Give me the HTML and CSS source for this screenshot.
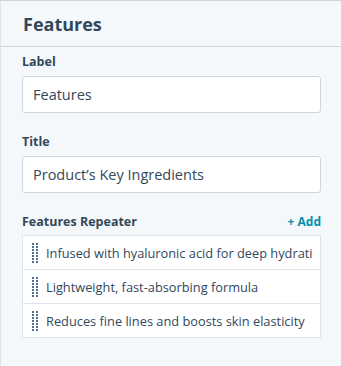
FILE: index.html
```html
<!DOCTYPE html>
<html>
<head>
<meta charset="utf-8">
<link rel="stylesheet" href="styles.css">
</head>
<body>
<div class="panel">
  <div class="header"><h1 class="title">Features</h1></div>
  <div class="body">
    <div class="field">
      <div class="label">Label</div>
      <div class="input">Features</div>
    </div>
    <div class="field">
      <div class="label">Title</div>
      <div class="input">Product’s Key Ingredients</div>
    </div>
    <div class="field">
      <div class="label-row"><span class="label">Features Repeater</span><span class="add">+ Add</span></div>
      <div class="list">
        <div class="row"><svg class="handle" width="6" height="20" viewBox="0 0 6 20"><g fill="#516f90"><rect x="0" y="0" width="2" height="2"/><rect x="4" y="0" width="2" height="2"/><rect x="0" y="3" width="2" height="2"/><rect x="4" y="3" width="2" height="2"/><rect x="0" y="6" width="2" height="2"/><rect x="4" y="6" width="2" height="2"/><rect x="0" y="9" width="2" height="2"/><rect x="4" y="9" width="2" height="2"/><rect x="0" y="12" width="2" height="2"/><rect x="4" y="12" width="2" height="2"/><rect x="0" y="15" width="2" height="2"/><rect x="4" y="15" width="2" height="2"/><rect x="0" y="18" width="2" height="2"/><rect x="4" y="18" width="2" height="2"/></g></svg><span class="text">Infused with hyaluronic acid for deep hydration</span></div>
        <div class="row"><svg class="handle" width="6" height="20" viewBox="0 0 6 20"><g fill="#516f90"><rect x="0" y="0" width="2" height="2"/><rect x="4" y="0" width="2" height="2"/><rect x="0" y="3" width="2" height="2"/><rect x="4" y="3" width="2" height="2"/><rect x="0" y="6" width="2" height="2"/><rect x="4" y="6" width="2" height="2"/><rect x="0" y="9" width="2" height="2"/><rect x="4" y="9" width="2" height="2"/><rect x="0" y="12" width="2" height="2"/><rect x="4" y="12" width="2" height="2"/><rect x="0" y="15" width="2" height="2"/><rect x="4" y="15" width="2" height="2"/><rect x="0" y="18" width="2" height="2"/><rect x="4" y="18" width="2" height="2"/></g></svg><span class="text">Lightweight, fast-absorbing formula</span></div>
        <div class="row"><svg class="handle" width="6" height="20" viewBox="0 0 6 20"><g fill="#516f90"><rect x="0" y="0" width="2" height="2"/><rect x="4" y="0" width="2" height="2"/><rect x="0" y="3" width="2" height="2"/><rect x="4" y="3" width="2" height="2"/><rect x="0" y="6" width="2" height="2"/><rect x="4" y="6" width="2" height="2"/><rect x="0" y="9" width="2" height="2"/><rect x="4" y="9" width="2" height="2"/><rect x="0" y="12" width="2" height="2"/><rect x="4" y="12" width="2" height="2"/><rect x="0" y="15" width="2" height="2"/><rect x="4" y="15" width="2" height="2"/><rect x="0" y="18" width="2" height="2"/><rect x="4" y="18" width="2" height="2"/></g></svg><span class="text">Reduces fine lines and boosts skin elasticity</span></div>
      </div>
    </div>
  </div>
</div>
</body>
</html>
```
FILE: styles.css
```css
html, body { margin: 0; padding: 0; }
body {
  width: 341px; height: 366px; overflow: hidden;
  background: #f5f8fa;
  font-family: "Open Sans", "Liberation Sans", sans-serif;
  color: #33475b;
}
.panel {
  height: 366px;
  border-left: 1px solid #dfe3eb;
  border-top: 1px solid #cbd6e2;
  box-sizing: border-box;
}
.header {
  height: 45px;
  border-bottom: 1px solid #cbd6e2;
  padding: 0 22px;
  display: flex; align-items: center;
}
.title { margin: 0; font-size: 18px; font-weight: 700; color: #33475b; }
.body { padding: 6px 20px 0 21px; display: flex; flex-direction: column; gap: 20px; }
.field { display: flex; flex-direction: column; }
.label { font-size: 12.5px; font-weight: 700; color: #33475b; line-height: 18px; }
.label-row { display: flex; justify-content: space-between; align-items: center; }
.add { font-size: 12px; font-weight: 700; color: #0091ae; line-height: 18px; }
.input {
  margin-top: 5px;
  height: 37px; box-sizing: border-box;
  background: #fff;
  border: 1px solid #cbd6e2; border-radius: 3px;
  padding: 0 10px;
  display: flex; align-items: center;
  font-size: 14.5px; color: #33475b;
}
.list {
  margin-top: 4px;
  background: #fff;
  border: 1px solid #dfe3eb;
}
.row {
  height: 33px;
  display: flex; align-items: center;
  padding: 0 8px 0 9px;
  overflow: hidden; white-space: nowrap;
}
.row + .row { border-top: 1px solid #dfe3eb; }
.handle { flex: none; margin-right: 8px; }
.text { font-size: 12.8px; color: #33475b; overflow: hidden; min-width: 0; }
```
